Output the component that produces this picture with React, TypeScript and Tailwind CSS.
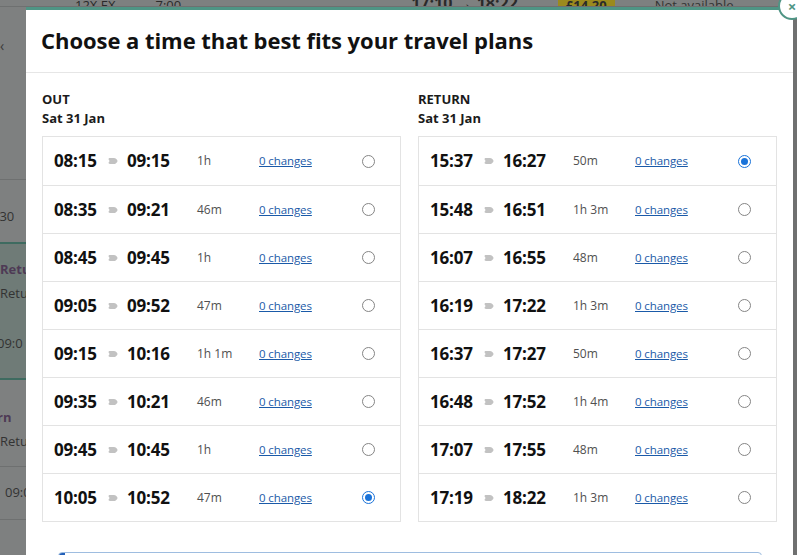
import React from 'react';

interface Journey {
  dep: string;
  arr: string;
  dur: string;
  selected?: boolean;
}

const outJourneys: Journey[] = [
  { dep: '08:15', arr: '09:15', dur: '1h' },
  { dep: '08:35', arr: '09:21', dur: '46m' },
  { dep: '08:45', arr: '09:45', dur: '1h' },
  { dep: '09:05', arr: '09:52', dur: '47m' },
  { dep: '09:15', arr: '10:16', dur: '1h 1m' },
  { dep: '09:35', arr: '10:21', dur: '46m' },
  { dep: '09:45', arr: '10:45', dur: '1h' },
  { dep: '10:05', arr: '10:52', dur: '47m', selected: true },
];

const returnJourneys: Journey[] = [
  { dep: '15:37', arr: '16:27', dur: '50m', selected: true },
  { dep: '15:48', arr: '16:51', dur: '1h 3m' },
  { dep: '16:07', arr: '16:55', dur: '48m' },
  { dep: '16:19', arr: '17:22', dur: '1h 3m' },
  { dep: '16:37', arr: '17:27', dur: '50m' },
  { dep: '16:48', arr: '17:52', dur: '1h 4m' },
  { dep: '17:07', arr: '17:55', dur: '48m' },
  { dep: '17:19', arr: '18:22', dur: '1h 3m' },
];

// small grey "to" marker between the two times
const ArrowBlob = () => (
  <svg width="10" height="8" viewBox="0 0 10 8" className="shrink-0">
    <path
      d="M0.5 2.2 C0.5 1.4 1.3 1 2.2 1.1 L5.5 1 C6.8 0.6 8.2 1.6 9.2 3 C9.6 3.6 9.6 4.4 9.2 5 C8.2 6.4 6.8 7.4 5.5 7 L2.2 6.9 C1.3 7 0.5 6.6 0.5 5.8 L1.6 4 Z"
      fill="#c2c2c2"
    />
  </svg>
);

const Radio = ({ checked }: { checked?: boolean }) =>
  checked ? (
    <span className="w-[13px] h-[13px] rounded-full border border-[#1a73d9] flex items-center justify-center">
      <span className="w-[7px] h-[7px] rounded-full bg-[#1a73d9]" />
    </span>
  ) : (
    <span className="w-[13px] h-[13px] rounded-full border border-[#858585] bg-white" />
  );

const JourneyTable = ({ label, items }: { label: string; items: Journey[] }) => (
  <div className="flex flex-col w-[359px]">
    <div className="text-[13px] font-bold text-[#1b1b1b] leading-[19px]">{label}</div>
    <div className="text-[13px] font-bold text-[#1b1b1b] leading-[19px] mb-[8px]">Sat 31 Jan</div>
    <div className="border border-[#e3e3e3]">
      {items.map((j, i) => (
        <div
          key={i}
          className={`h-[48px] flex items-center pl-[11px] ${i > 0 ? 'border-t border-[#e3e3e3]' : ''}`}
        >
          <span className="text-[17px] font-bold text-[#111] w-[45px] tracking-[-0.2px]">{j.dep}</span>
          <span className="w-[28px] flex justify-center">
            <ArrowBlob />
          </span>
          <span className="text-[17px] font-bold text-[#111] w-[70px] tracking-[-0.2px]">{j.arr}</span>
          <span className="text-[12px] text-[#505050] w-[62px]">{j.dur}</span>
          <a className="text-[11.5px] text-[#1a5aa8] underline w-[103px] tracking-[-0.1px]">0 changes</a>
          <Radio checked={j.selected} />
        </div>
      ))}
    </div>
  </div>
);

const App: React.FC = () => {
  return (
    <div
      className="relative w-[797px] h-[555px] overflow-hidden bg-[#7e8080]"
      style={{ fontFamily: '"Open Sans", "Noto Sans", Arial, sans-serif' }}
    >
      {/* dimmed page behind the dialog */}
      <div className="absolute left-0 top-0 w-[797px] h-[7px] overflow-hidden border-b border-[#6e7070]">
        <div className="flex gap-[40px] items-end text-[13px] text-[#2a2a2a] -mt-[9px] pl-[75px]">
          <span>12X EX</span>
          <span>7:00</span>
          <span className="font-bold text-[16px] ml-[190px]">17:10 → 18:22</span>
          <span className="bg-[#9b8a1e] px-2 font-bold">£14.20</span>
          <span className="text-[#333]">Not available</span>
        </div>
      </div>
      <div className="absolute left-0 top-[7px] w-[26px] h-[548px] overflow-hidden text-[13px] text-[#2b2b2b]">
        <div className="h-[173px] border-b border-[#6e7070] pt-[28px] text-[#3a3a3a] text-[14px]">‹</div>
        <div className="h-[62px] pt-[27px] text-[#333] -ml-[8px] leading-[18px]">730</div>
        <div className="h-[138px] bg-[#6f7b77] border-t-2 border-b-2 border-[#3e6b60]">
          <div className="font-bold text-[#4e3a55] pt-[16px] leading-[18px]">Retu</div>
          <div className="text-[#333] pt-[6px] leading-[18px]">Retur</div>
          <div className="text-[#333] pt-[14px] -ml-[3px] leading-[18px]">. 09:0</div>
        </div>
        <div className="h-[87px] border-b border-[#6e7070]">
          <div className="font-bold text-[#4e3a55] pt-[28px] -ml-[3px] leading-[18px]">rn</div>
          <div className="text-[#333] pt-[6px] leading-[18px]">Retur</div>
        </div>
        <div className="h-[53px] border-b border-[#6e7070] pt-[16px] pl-[5px] text-[#333] leading-[18px]">09:0</div>
      </div>
      <div className="absolute right-0 top-0 w-[4px] h-[555px] bg-[#6f7070]" />

      {/* dialog */}
      <div className="absolute left-[26px] top-[7px] w-[767px] h-[560px] bg-white border-t-[3px] border-[#4f9585]">
        <div className="h-[63px] border-b border-[#e6e6e6] pl-[15px] pt-[15px]">
          <h2 className="text-[22px] font-bold text-[#111] tracking-[-0.05px] leading-[30px]">
            Choose a time that best fits your travel plans
          </h2>
        </div>
        <div className="flex gap-[17px] pl-[16px] pt-[17px]">
          <JourneyTable label="OUT" items={outJourneys} />
          <JourneyTable label="RETURN" items={returnJourneys} />
        </div>
        <div className="ml-[32px] mt-[30px] w-[704px] h-[12px] rounded-t-[4px] border border-[#9ebde0] overflow-hidden">
          <div className="w-[6px] h-full bg-[#2360b8]" />
        </div>
      </div>

      {/* close button */}
      <div className="absolute left-[778px] -top-[8px] w-[28px] h-[28px] rounded-full bg-white border-2 border-[#4f9585] flex items-center justify-center text-[#4f9585] text-[15px] font-bold">
        ×
      </div>
    </div>
  );
};

export default App;
